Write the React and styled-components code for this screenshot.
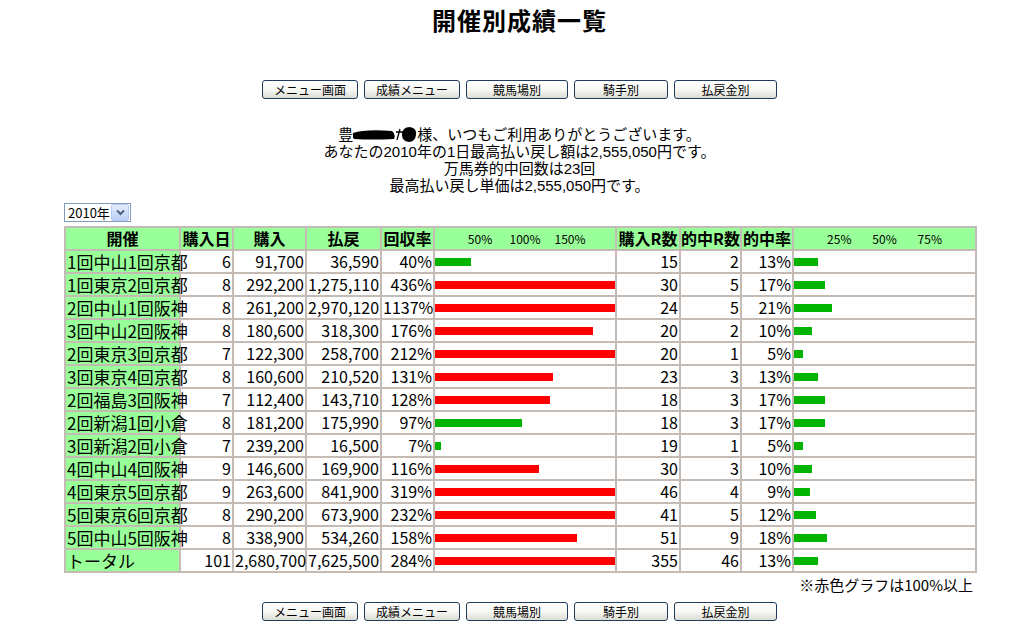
import React from "react";
import styled, { createGlobalStyle } from "styled-components";

const rows = [
  ["1回中山1回京都", 6, "91,700", "36,590", 40, 15, 2, 13],
  ["1回東京2回京都", 8, "292,200", "1,275,110", 436, 30, 5, 17],
  ["2回中山1回阪神", 8, "261,200", "2,970,120", 1137, 24, 5, 21],
  ["3回中山2回阪神", 8, "180,600", "318,300", 176, 20, 2, 10],
  ["2回東京3回京都", 7, "122,300", "258,700", 212, 20, 1, 5],
  ["3回東京4回京都", 8, "160,600", "210,520", 131, 23, 3, 13],
  ["2回福島3回阪神", 7, "112,400", "143,710", 128, 18, 3, 17],
  ["2回新潟1回小倉", 8, "181,200", "175,990", 97, 18, 3, 17],
  ["3回新潟2回小倉", 7, "239,200", "16,500", 7, 19, 1, 5],
  ["4回中山4回阪神", 9, "146,600", "169,900", 116, 30, 3, 10],
  ["4回東京5回京都", 9, "263,600", "841,900", 319, 46, 4, 9],
  ["5回東京6回京都", 8, "290,200", "673,900", 232, 41, 5, 12],
  ["5回中山5回阪神", 8, "338,900", "534,260", 158, 51, 9, 18],
  ["トータル", 101, "2,680,700", "7,625,500", 284, 355, 46, 13],
];

const menu = [
  ["メニュー画面", 96],
  ["成績メニュー", 96],
  ["競馬場別", 102],
  ["騎手別", 94],
  ["払戻金別", 103],
];

const colWidths = [115, 53, 73, 75, 53, 182, 64, 61, 52, 183];

const GlobalStyle = createGlobalStyle`
  html, body {
    margin: 0;
    padding: 0;
    background: #fff;
    overflow: hidden;
  }
  body {
    font-family: "Noto Sans CJK JP", sans-serif;
    color: #000;
  }
`;

const Page = styled.div`
  width: 1039px;
  padding-top: 4px;
  text-align: center;
`;

const Title = styled.h1`
  margin: 0;
  font-size: 24px;
  line-height: 32px;
  font-weight: bold;
  letter-spacing: 1px;
`;

const Nav = styled.div`
  display: flex;
  justify-content: center;
  gap: 6px;
  margin-top: ${(p) => p.$top}px;
`;

const NavButton = styled.button`
  width: ${(p) => p.$w}px;
  height: 19px;
  padding: 0;
  font-family: "Noto Sans CJK JP", sans-serif;
  font-size: 12px;
  line-height: 17px;
  color: #000;
  border: 1px solid #203c5c;
  border-radius: 3px;
  background: linear-gradient(#ffffff, #f6f6f2 55%, #dcdcd4);
`;

/* Liberation Sans first keeps the line boxes tight; kana fall through to Noto */
const Greeting = styled.div`
  margin-top: 27px;
  font-family: "Liberation Sans", "Noto Sans CJK JP", sans-serif;
  font-size: 15px;
  line-height: 17px;
`;

const Redacted = styled.svg`
  vertical-align: -2px;
`;

const Board = styled.div`
  width: 911px;
  margin: 9px auto 0;
  text-align: left;
`;

const SelectRow = styled.div`
  display: flex;
`;

const YearSelect = styled.div`
  display: flex;
  align-items: center;
  justify-content: space-between;
  box-sizing: border-box;
  width: 67px;
  height: 19px;
  padding: 0 1px 0 3px;
  border: 1px solid #7f9db9;
  font-size: 13px;
`;

const ArrowBox = styled.span`
  display: flex;
  align-items: center;
  justify-content: center;
  width: 16px;
  height: 15px;
  border: 1px solid #b6c9ef;
  border-radius: 2px;
  background: linear-gradient(#e4ecfd, #bccff6);
`;

const Table = styled.table`
  width: 911px;
  margin-top: 4px;
  border-collapse: collapse;
  table-layout: fixed;
  border: 2px solid #c4bcb4;
`;

const Col = styled.col`
  width: ${(p) => p.$w}px;
`;

const Head = styled.th`
  height: 21px;
  padding: 0;
  border: 2px solid #c4bcb4;
  background: #99ff99;
  font-size: 16px;
  line-height: 19px;
  font-weight: bold;
  text-align: center;
  white-space: nowrap;
`;

const ScaleHead = styled(Head)`
  font-weight: normal;
`;

const Scale = styled.div`
  display: grid;
  grid-template-columns: repeat(8, 1fr);
  font-size: 12px;
`;

const ScaleMark = styled.span`
  grid-column: ${(p) => p.$at} / span 2;
  text-align: center;
`;

const Cell = styled.td`
  height: 21px;
  padding: 0 1px;
  border: 2px solid #c4bcb4;
  font-size: 16px;
  line-height: 19px;
  text-align: right;
  white-space: nowrap;
`;

const NameCell = styled(Cell)`
  background: #99ff99;
  text-align: left;
  font-size: 17px;
`;

const GraphCell = styled(Cell)`
  padding: 0;
  text-align: left;
`;

const Bar = styled.div`
  height: 8px;
  background: ${(p) => (p.$over ? "#ff0000" : "#00b400")};
`;

const Note = styled.div`
  margin-top: 3px;
  padding-right: 2px;
  font-size: 15px;
  line-height: 18px;
  text-align: right;
`;

const Menu = ({ top }) => (
  <Nav $top={top}>
    {menu.map(([label, w]) => (
      <NavButton key={label} $w={w}>
        {label}
      </NavButton>
    ))}
  </Nav>
);

export default function App() {
  return (
    <Page>
      <GlobalStyle />
      <Title>開催別成績一覧</Title>
      <Menu top={44} />
      <Greeting>
        <div>
          豊
          <Redacted width="64" height="15" viewBox="0 0 64 15">
            <path d="M0 6 Q12 2 39 4 Q43 7 41 12 Q20 13 1 12 Q-2 9 0 6 Z" fill="#000" />
            <path d="M43 5 L50 5 M47 2 L44 13" stroke="#000" strokeWidth="1.3" fill="none" />
            <path d="M49 8 Q49 0 57 0 Q64 1 63 8 Q62 15 56 15 Q49 14 49 8 Z" fill="#000" />
          </Redacted>
          様、いつもご利用ありがとうございます。
        </div>
        <div>あなたの2010年の1日最高払い戻し額は2,555,050円です。</div>
        <div>万馬券的中回数は23回</div>
        <div>最高払い戻し単価は2,555,050円です。</div>
      </Greeting>
      <Board>
        <SelectRow>
          <YearSelect>
            2010年
            <ArrowBox>
              <svg width="9" height="7" viewBox="0 0 9 7">
                <path d="M1 1.5 L4.5 5 L8 1.5" stroke="#4d6185" strokeWidth="2" fill="none" />
              </svg>
            </ArrowBox>
          </YearSelect>
        </SelectRow>
        <Table>
          <colgroup>
            {colWidths.map((w, i) => (
              <Col key={i} $w={w} />
            ))}
          </colgroup>
          <thead>
            <tr>
              <Head>開催</Head>
              <Head>購入日</Head>
              <Head>購入</Head>
              <Head>払戻</Head>
              <Head>回収率</Head>
              <ScaleHead>
                <Scale>
                  <ScaleMark $at={2}>50%</ScaleMark>
                  <ScaleMark $at={4}>100%</ScaleMark>
                  <ScaleMark $at={6}>150%</ScaleMark>
                </Scale>
              </ScaleHead>
              <Head>購入R数</Head>
              <Head>的中R数</Head>
              <Head>的中率</Head>
              <ScaleHead>
                <Scale>
                  <ScaleMark $at={2}>25%</ScaleMark>
                  <ScaleMark $at={4}>50%</ScaleMark>
                  <ScaleMark $at={6}>75%</ScaleMark>
                </Scale>
              </ScaleHead>
            </tr>
          </thead>
          <tbody>
            {rows.map(([name, days, buy, pay, rate, races, hits, hitRate]) => (
              <tr key={name}>
                <NameCell>{name}</NameCell>
                <Cell>{days}</Cell>
                <Cell>{buy}</Cell>
                <Cell>{pay}</Cell>
                <Cell>{rate}%</Cell>
                <GraphCell>
                  <Bar $over={rate >= 100} style={{ width: `${Math.min(rate / 2, 100)}%` }} />
                </GraphCell>
                <Cell>{races}</Cell>
                <Cell>{hits}</Cell>
                <Cell>{hitRate}%</Cell>
                <GraphCell>
                  <Bar style={{ width: `${Math.min(hitRate, 100)}%` }} />
                </GraphCell>
              </tr>
            ))}
          </tbody>
        </Table>
        <Note>※赤色グラフは100%以上</Note>
      </Board>
      <Menu top={8} />
    </Page>
  );
}
